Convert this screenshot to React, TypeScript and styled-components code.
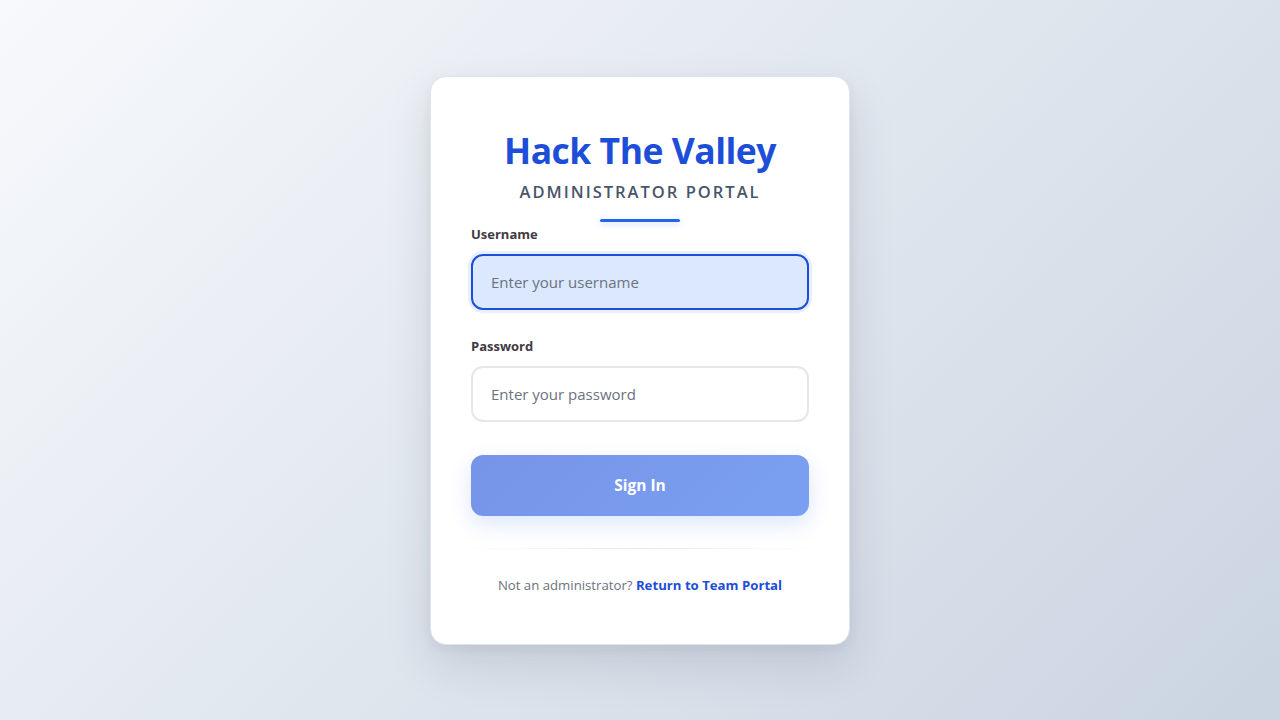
import { createGlobalStyle, styled } from "styled-components";

const GlobalStyle = createGlobalStyle`
  html, body {
    margin: 0;
    padding: 0;
  }
  body {
    font-family: "Open Sans", "Noto Sans", sans-serif;
    min-height: 100vh;
    background: linear-gradient(135deg, #f7f9fc 0%, #cad4e1 100%);
  }
`;

const App = () => {
  return (
    <>
      <GlobalStyle />
      <Page>
        <Card>
          <Header>
            <Title>Hack The Valley</Title>
            <Subtitle>Administrator Portal</Subtitle>
            <Accent />
          </Header>
          <Form onSubmit={(e) => e.preventDefault()}>
            <Field>
              <Label htmlFor="username">Username</Label>
              <Input
                id="username"
                type="text"
                placeholder="Enter your username"
                $focused
              />
            </Field>
            <Field>
              <Label htmlFor="password">Password</Label>
              <Input id="password" type="password" placeholder="Enter your password" />
            </Field>
            <SubmitButton type="submit" disabled>
              Sign In
            </SubmitButton>
          </Form>
          <Divider />
          <Footer>
            Not an administrator? <FooterLink href="#">Return to Team Portal</FooterLink>
          </Footer>
        </Card>
      </Page>
    </>
  );
};

export default App;

const Page = styled.div`
  min-height: 100vh;
  display: flex;
  align-items: center;
  justify-content: center;
`;

const Card = styled.div`
  box-sizing: border-box;
  width: 420px;
  padding: 50px 40px 49px;
  background: #ffffff;
  border: 1px solid #dfe5ee;
  border-radius: 16px;
  box-shadow: 0 20px 45px rgba(30, 41, 59, 0.13), 0 4px 12px rgba(30, 41, 59, 0.05);
`;

const Header = styled.div`
  display: flex;
  flex-direction: column;
  align-items: center;
  margin-bottom: 3px;
`;

const Title = styled.h1`
  margin: 0;
  font-size: 35.5px;
  line-height: 46px;
  font-weight: 700;
  color: #1d4ed8;
  letter-spacing: -0.5px;
`;

const Subtitle = styled.p`
  margin: 7px 0 0;
  font-size: 16.5px;
  line-height: 24px;
  font-weight: 600;
  letter-spacing: 2px;
  text-transform: uppercase;
  color: #475569;
`;

const Accent = styled.div`
  width: 80px;
  height: 3px;
  margin-top: 15px;
  border-radius: 2px;
  background: #2563eb;
  box-shadow: 0 2px 6px rgba(37, 99, 235, 0.25);
`;

const Form = styled.form`
  display: flex;
  flex-direction: column;
`;

const Field = styled.div`
  display: flex;
  flex-direction: column;
  margin-bottom: 27px;
`;

const Label = styled.label`
  font-size: 13px;
  line-height: 18px;
  font-weight: 700;
  color: #3f3a44;
  margin-bottom: 11px;
`;

const Input = styled.input<{ $focused?: boolean }>`
  box-sizing: border-box;
  height: 56px;
  width: 100%;
  padding: 0 18px;
  font-family: inherit;
  font-size: 15px;
  color: #1f2937;
  border-radius: 12px;
  outline: none;
  border: 2px solid ${(p) => (p.$focused ? "#1d4ed8" : "#e5e7eb")};
  background: ${(p) => (p.$focused ? "#dbe8fe" : "#ffffff")};
  box-shadow: ${(p) => (p.$focused ? "0 0 0 3px rgba(59, 130, 246, 0.12)" : "none")};

  &::placeholder {
    color: #6b7280;
  }
`;

const SubmitButton = styled.button`
  height: 61px;
  margin-top: 6px;
  border: none;
  border-radius: 12px;
  font-family: inherit;
  font-size: 15.5px;
  font-weight: 700;
  color: #ffffff;
  background: linear-gradient(135deg, #7694e8 0%, #7ba0f1 100%);
  box-shadow: 0 8px 22px rgba(37, 99, 235, 0.16);
  cursor: not-allowed;
`;

const Divider = styled.div`
  height: 1px;
  margin: 32px -14px 0;
  background: linear-gradient(90deg, transparent, #e5e7eb 50%, transparent);
`;

const Footer = styled.p`
  margin: 26px 0 0;
  text-align: center;
  font-size: 13.2px;
  line-height: 20px;
  color: #6b7280;
`;

const FooterLink = styled.a`
  color: #1d4ed8;
  font-weight: 700;
  text-decoration: none;
`;
